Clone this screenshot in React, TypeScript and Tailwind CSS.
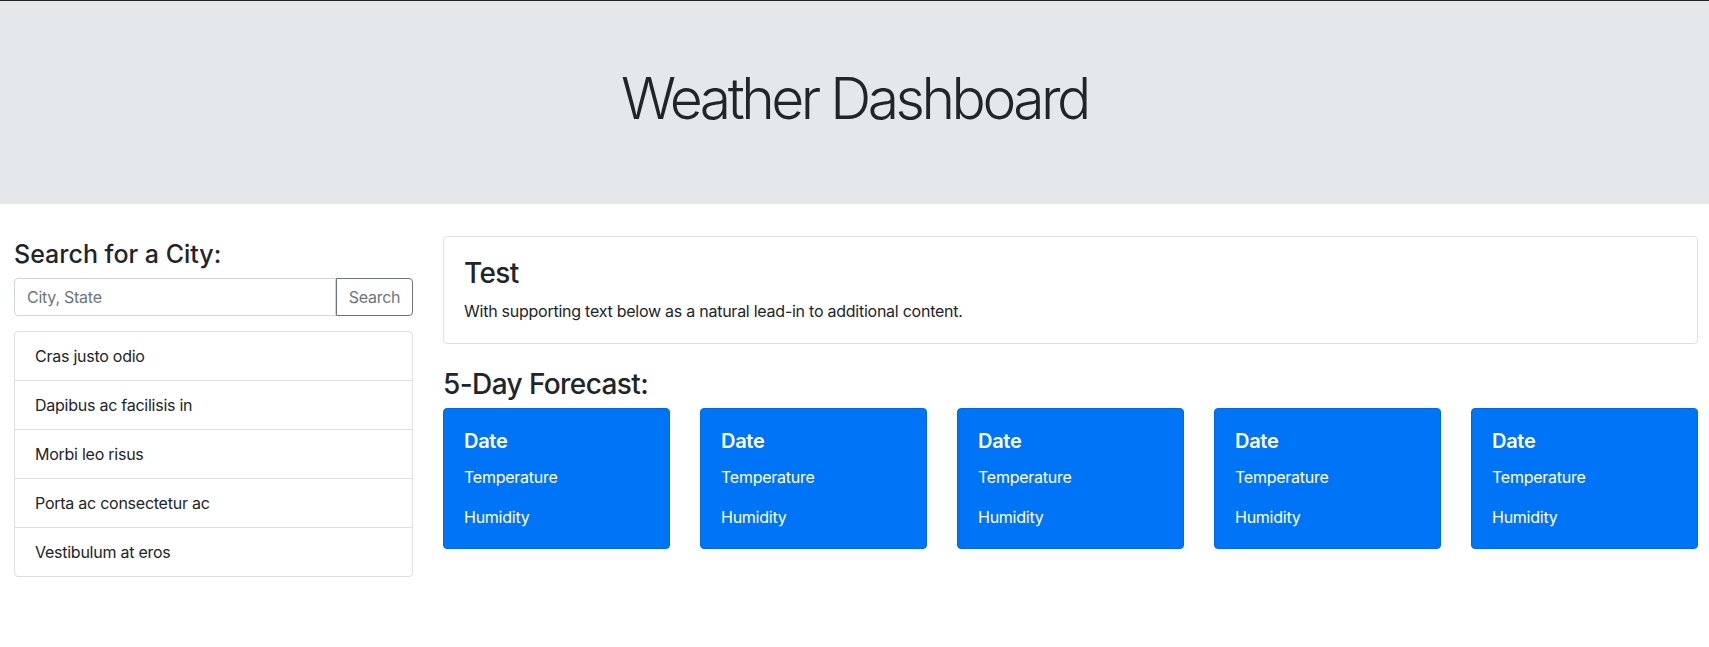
const cities = [
  "Cras justo odio",
  "Dapibus ac facilisis in",
  "Morbi leo risus",
  "Porta ac consectetur ac",
  "Vestibulum at eros",
];

const days = [1, 2, 3, 4, 5];

function ForecastCard() {
  return (
    <div className="bg-[#0074f6] text-white rounded-[4px] border border-[#0069dd] px-5 pt-5 pb-[19px]">
      <h5 className="text-[20px] font-semibold leading-[24px] tracking-[-0.3px] mb-3">Date</h5>
      <p className="text-[16px] leading-[24px] mb-4">Temperature</p>
      <p className="text-[16px] leading-[24px]">Humidity</p>
    </div>
  );
}

export default function App() {
  return (
    <div className="min-h-screen bg-white text-[#212529] font-['Inter',sans-serif] tracking-[-0.25px] border-t border-[#222]">
      {/* header */}
      <header className="h-[203px] bg-[#e4e8eb] flex items-center justify-center">
        <h1 className="text-[57px] font-light leading-[1.2] tracking-[-3.5px] mt-[-6px]">
          Weather Dashboard
        </h1>
      </header>

      <main className="flex gap-[30px] pl-[14px] pr-[11px] pt-8">
        {/* search column */}
        <aside className="w-[399px] shrink-0 pt-[3px]">
          <h4 className="text-[25px] font-[550] leading-[1.2] tracking-normal mb-[9px]">Search for a City:</h4>
          <div className="flex h-[38px]">
            <input
              type="text"
              placeholder="City, State"
              className="flex-1 min-w-0 border border-[#ced4da] rounded-l-[4px] px-3 text-[16px] placeholder:text-[#6c757d] outline-none"
            />
            <button className="w-[77px] border border-[#6c757d] text-[#6c757d] rounded-r-[4px] text-[16px]">
              Search
            </button>
          </div>
          <ul className="mt-[15px] border border-[#dfdfdf] rounded-[4px] divide-y divide-[#dfdfdf]">
            {cities.map((c) => (
              <li key={c} className="px-5 py-3 text-[16px] leading-[24px]">
                {c}
              </li>
            ))}
          </ul>
        </aside>

        {/* weather column */}
        <section className="flex-1 min-w-0">
          <div className="border border-[#dfdfdf] rounded-[4px] p-5">
            <h3 className="text-[28px] font-[550] leading-[1.2] tracking-[-0.6px] mb-2">Test</h3>
            <p className="text-[16px] leading-[24px]">
              With supporting text below as a natural lead-in to additional content.
            </p>
          </div>

          <h3 className="text-[28px] font-[550] leading-[1.2] tracking-[-0.6px] mt-6 mb-[7px]">5-Day Forecast:</h3>
          <div className="grid grid-cols-5 gap-[30px]">
            {days.map((d) => (
              <ForecastCard key={d} />
            ))}
          </div>
        </section>
      </main>
    </div>
  );
}
